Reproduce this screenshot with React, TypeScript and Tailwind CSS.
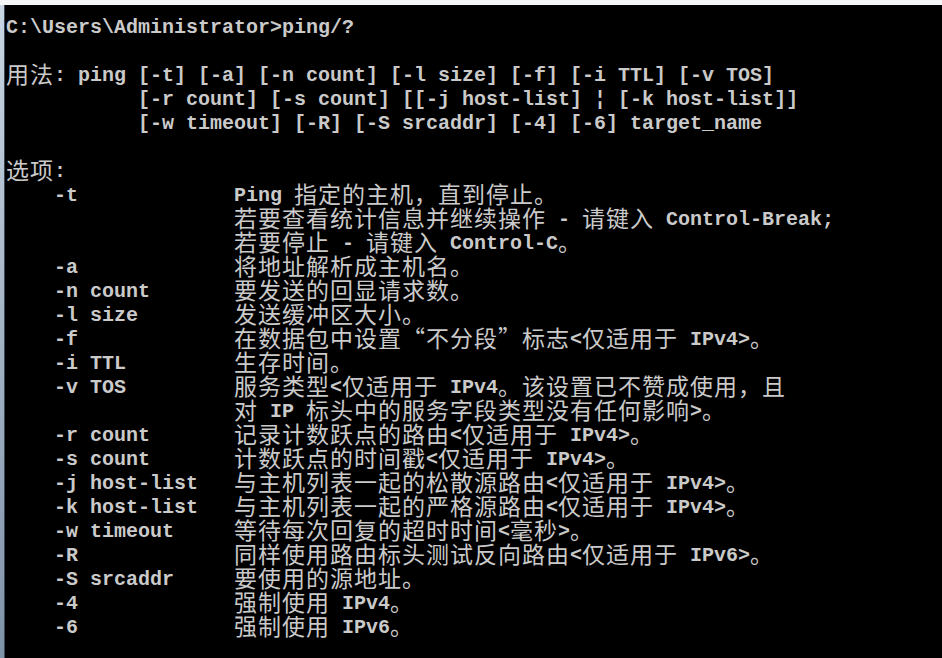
import React from "react";

const lines = [
  "C:\\Users\\Administrator>ping/?",
  "",
  "用法: ping [-t] [-a] [-n count] [-l size] [-f] [-i TTL] [-v TOS]",
  "           [-r count] [-s count] [[-j host-list] ¦ [-k host-list]]",
  "           [-w timeout] [-R] [-S srcaddr] [-4] [-6] target_name",
  "",
  "选项:",
  "    -t             Ping 指定的主机，直到停止。",
  "                   若要查看统计信息并继续操作 - 请键入 Control-Break;",
  "                   若要停止 - 请键入 Control-C。",
  "    -a             将地址解析成主机名。",
  "    -n count       要发送的回显请求数。",
  "    -l size        发送缓冲区大小。",
  "    -f             在数据包中设置“不分段”标志<仅适用于 IPv4>。",
  "    -i TTL         生存时间。",
  "    -v TOS         服务类型<仅适用于 IPv4。该设置已不赞成使用，且",
  "                   对 IP 标头中的服务字段类型没有任何影响>。",
  "    -r count       记录计数跃点的路由<仅适用于 IPv4>。",
  "    -s count       计数跃点的时间戳<仅适用于 IPv4>。",
  "    -j host-list   与主机列表一起的松散源路由<仅适用于 IPv4>。",
  "    -k host-list   与主机列表一起的严格源路由<仅适用于 IPv4>。",
  "    -w timeout     等待每次回复的超时时间<毫秒>。",
  "    -R             同样使用路由标头测试反向路由<仅适用于 IPv6>。",
  "    -S srcaddr     要使用的源地址。",
  "    -4             强制使用 IPv4。",
  "    -6             强制使用 IPv6。",
];

// wide chars take two console cells (24px), everything else one (12px)
const wide = /([\u2018-\u201f\u3000-\u303f\u4e00-\u9fff\uff00-\uffef]+)/;

function ConsoleLine({ text }: { text: string }) {
  const parts = text.split(wide).filter((p) => p !== "");
  return (
    <div className="h-[24px] whitespace-pre flex items-start">
      {parts.map((p, i) =>
        wide.test(p) ? (
          <span
            key={i}
            className="h-[24px] text-[23px] leading-[20px] tracking-[1px] font-normal font-['Noto_Sans_CJK_SC',sans-serif]"
          >
            {p}
          </span>
        ) : (
          <span
            key={i}
            className="h-[24px] text-[20px] leading-[26px] font-bold font-['Liberation_Mono',monospace]"
          >
            {p}
          </span>
        )
      )}
    </div>
  );
}

export default function App() {
  return (
    <div className="w-[942px] h-[658px] bg-black flex flex-col overflow-hidden">
      <div className="h-[5px] bg-[#f5f6f7]" />
      <div className="flex flex-1">
        <div className="w-[4px] bg-gradient-to-b from-[#c9d6e3] to-[#7f93a8]" />
        <div className="w-[1px] bg-[#3a4654]" />
        <div className="flex-1 pl-[1px] pt-[10px] text-[#cacaca]">
          {lines.map((l, i) => (
            <ConsoleLine key={i} text={l} />
          ))}
        </div>
      </div>
    </div>
  );
}
